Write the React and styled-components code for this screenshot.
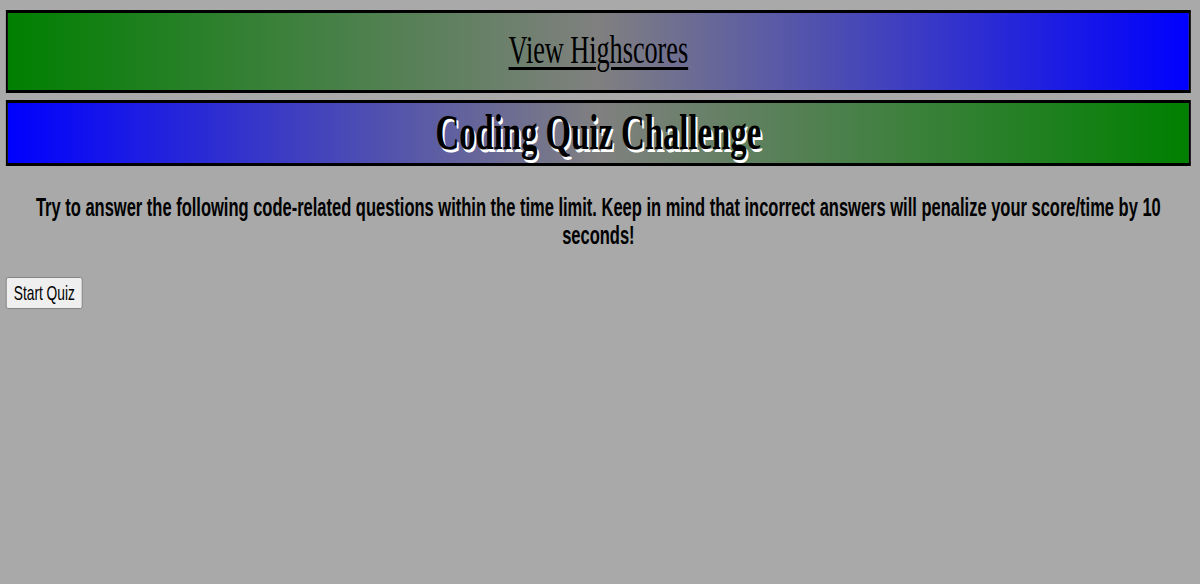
import styled, { createGlobalStyle } from "styled-components";

// the reference is squeezed sideways, so the page is laid out wide and pressed to fit
const SQUEEZE = 0.655;

const GlobalStyle = createGlobalStyle`
  html, body {
    margin: 0;
    padding: 0;
    background-color: darkgray;
    overflow: hidden;
  }
`;

const Page = styled.div`
  width: ${1200 / SQUEEZE}px;
  min-height: 584px;
  box-sizing: border-box;
  padding: 10px 14px 0 9px;
  display: flex;
  flex-direction: column;
  align-items: stretch;
  transform: scaleX(${SQUEEZE});
  transform-origin: 0 0;
  font-family: "Liberation Serif", "Times New Roman", serif;
`;

const Banner = styled.header`
  border: 3px solid black;
  text-align: center;
  display: flex;
  justify-content: center;
  align-items: flex-start;
  background: linear-gradient(
    to right,
    ${(props) => props.from},
    gray,
    ${(props) => props.to}
  );
`;

const NavBanner = styled(Banner)`
  height: 77px;
  font-size: 40px;
  line-height: 46px;
`;

const TitleBanner = styled(Banner)`
  margin-top: 7px;
  height: 60px;
`;

const Link = styled.a`
  margin-top: 14px;
  color: black;
  text-decoration: underline;
  text-decoration-thickness: 3px;
  text-underline-offset: 4px;
  cursor: pointer;
`;

const Title = styled.h1`
  margin: 0;
  font-size: 50px;
  line-height: 58px;
  font-weight: bold;
  color: black;
  text-shadow: 3px 3px white;
`;

const Intro = styled.p`
  margin: 27px 0 0;
  font-family: "Liberation Sans", Arial, sans-serif;
  font-weight: bold;
  font-size: 25.2px;
  line-height: 28px;
  text-align: center;
  color: black;
`;

const StartBtn = styled.button`
  align-self: flex-start;
  margin-top: 28px;
  height: 32px;
  padding: 0 11px;
  font-family: "Liberation Sans", Arial, sans-serif;
  font-size: 21px;
  color: black;
  background-color: #efefef;
  border: 1px solid #767676;
  border-radius: 3px;
  cursor: pointer;
`;

export default function App() {
  return (
    <>
      <GlobalStyle />
      <Page>
        <NavBanner from="green" to="blue">
          <Link>View Highscores</Link>
        </NavBanner>
        <TitleBanner from="blue" to="green">
          <Title>Coding Quiz Challenge</Title>
        </TitleBanner>
        <Intro>
          Try to answer the following code-related questions within the time
          limit. Keep in mind that incorrect answers will penalize your
          score/time by 10 seconds!
        </Intro>
        <StartBtn>Start Quiz</StartBtn>
      </Page>
    </>
  );
}
